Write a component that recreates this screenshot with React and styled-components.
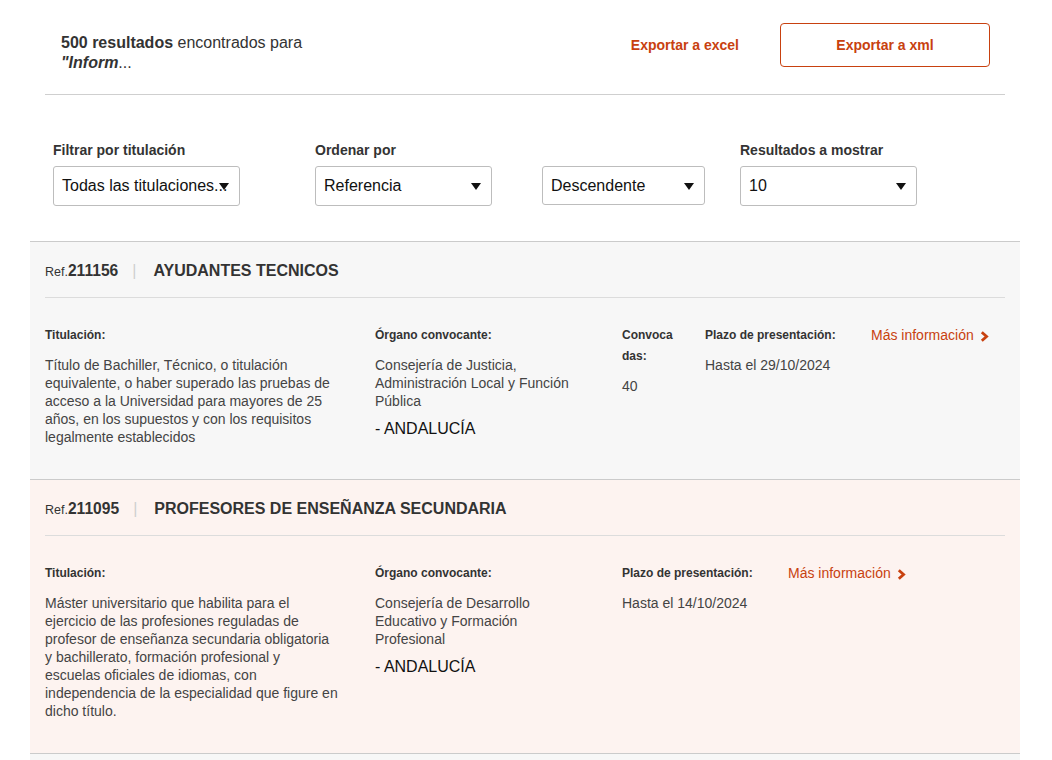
import React from "react";
import styled, { createGlobalStyle } from "styled-components";

const GlobalStyle = createGlobalStyle`
  html, body { margin: 0; padding: 0; background: #fff; }
  body { font-family: "Liberation Sans", Arial, sans-serif; color: #333; }
  * { box-sizing: border-box; }
`;

const RED = "#c8410f";

const Page = styled.div`
  width: 990px;
  margin-left: 30px;
  padding-top: 23px;
`;

const HeaderRow = styled.div`
  margin: 0 15px;
  padding: 0 15px 21px 16px;
  border-bottom: 1px solid #cfcfcf;
  display: flex;
  justify-content: space-between;
  align-items: flex-start;
`;

const Summary = styled.div`
  margin-top: 10px;
  font-size: 16px;
  line-height: 20px;
  color: #333;
  b { font-weight: bold; }
  i { font-weight: bold; }
`;

const Actions = styled.div`
  display: flex;
  align-items: center;
`;

const LinkButton = styled.a`
  font-size: 14px;
  font-weight: bold;
  color: ${RED};
  text-decoration: none;
  margin-right: 41px;
  cursor: pointer;
`;

const OutlineButton = styled.button`
  width: 210px;
  height: 44px;
  border: 1px solid ${RED};
  border-radius: 4px;
  background: #fff;
  color: ${RED};
  font-family: inherit;
  font-size: 14px;
  font-weight: bold;
  cursor: pointer;
`;

const Filters = styled.div`
  margin: 46px 15px 35px;
  padding-left: 8px;
  display: grid;
  grid-template-columns: 262px 227px 198px auto;
  align-items: end;
`;

const FilterGroup = styled.div`
  display: flex;
  flex-direction: column;
`;

const FilterLabel = styled.div`
  font-size: 14px;
  font-weight: bold;
  line-height: 18px;
  color: #333;
  margin-bottom: 7px;
`;

const SelectBox = styled.div`
  position: relative;
  width: ${(p) => p.$w}px;
  height: ${(p) => p.$h || 40}px;
  margin-bottom: ${(p) => (p.$h ? 40 - p.$h : 0)}px;
  border: 1px solid #bdbdbd;
  border-radius: 3px;
  background: #fff;
  padding: 0 0 0 8px;
  display: flex;
  align-items: center;
  font-size: 16px;
  color: #111;
  white-space: nowrap;
  overflow: hidden;
`;

const Arrow = styled.svg`
  position: absolute;
  right: 10px;
  top: 50%;
  margin-top: -3px;
`;

const Select = ({ w, h, children }) => (
  <SelectBox $w={w} $h={h}>
    {children}
    <Arrow width="10" height="7" viewBox="0 0 10 7">
      <path d="M0 0 L10 0 L5 7 Z" fill="#111" />
    </Arrow>
  </SelectBox>
);

const Card = styled.div`
  background: ${(p) => (p.$tint ? "#fdf3f0" : "#f7f7f7")};
  border-top: 1px solid #cbcbcb;
  min-height: ${(p) => (p.$stub ? "40px" : "auto")};
`;

const CardHeader = styled.div`
  margin: 0 15px;
  padding: 19px 0 15px;
  border-bottom: 1px solid #dcdcdc;
  display: flex;
  align-items: baseline;
  line-height: 20px;
  color: #333;
`;

const RefPrefix = styled.span`
  font-size: 12.5px;
`;

const RefNumber = styled.span`
  font-size: 15.6px;
  font-weight: bold;
`;

const Separator = styled.span`
  color: #cfcfcf;
  font-size: 16px;
  margin: 0 17px 0 14px;
`;

const Title = styled.span`
  font-size: 16px;
  font-weight: bold;
  color: #333;
`;

const CardBody = styled.div`
  padding: 27px 15px 33px;
  display: flex;
  align-items: flex-start;
`;

const Col = styled.div`
  width: ${(p) => p.$w}px;
  flex: none;
`;

const ColInner = styled.div`
  width: ${(p) => p.$w}px;
`;

const FieldLabel = styled.div`
  font-size: 12px;
  font-weight: bold;
  line-height: 21px;
  color: #333;
  margin-bottom: 10px;
  word-break: break-all;
`;

const FieldText = styled.div`
  font-size: 14px;
  line-height: 18px;
  color: #444;
`;

const Region = styled.div`
  margin-top: 9px;
  font-size: 16px;
  line-height: 20px;
  color: #111;
`;

const MoreLink = styled.a`
  display: inline-flex;
  align-items: center;
  font-size: 14px;
  line-height: 21px;
  color: ${RED};
  text-decoration: none;
  cursor: pointer;
  svg { margin-left: 6px; margin-top: 1px; }
`;

const Chevron = () => (
  <svg width="9" height="11" viewBox="0 0 9 11">
    <path d="M1.8 1.2 L6.6 5.5 L1.8 9.8" fill="none" stroke={RED} strokeWidth="2.8" strokeLinejoin="miter" />
  </svg>
);

const results = [
  {
    ref: "211156",
    title: "AYUDANTES TECNICOS",
    titulacion:
      "Título de Bachiller, Técnico, o titulación equivalente, o haber superado las pruebas de acceso a la Universidad para mayores de 25 años, en los supuestos y con los requisitos legalmente establecidos",
    organo: "Consejería de Justicia, Administración Local y Función Pública",
    region: "- ANDALUCÍA",
    convocadas: "40",
    plazo: "Hasta el 29/10/2024",
    tint: false,
  },
  {
    ref: "211095",
    title: "PROFESORES DE ENSEÑANZA SECUNDARIA",
    titulacion:
      "Máster universitario que habilita para el ejercicio de las profesiones reguladas de profesor de enseñanza secundaria obligatoria y bachillerato, formación profesional y escuelas oficiales de idiomas, con independencia de la especialidad que figure en dicho título.",
    organo: "Consejería de Desarrollo Educativo y Formación Profesional",
    region: "- ANDALUCÍA",
    convocadas: null,
    plazo: "Hasta el 14/10/2024",
    tint: true,
  },
];

export default function App() {
  return (
    <>
      <GlobalStyle />
      <Page>
        <HeaderRow>
          <Summary>
            <b>500 resultados</b> encontrados para
            <br />
            <i>"Inform</i>...
          </Summary>
          <Actions>
            <LinkButton>Exportar a excel</LinkButton>
            <OutlineButton>Exportar a xml</OutlineButton>
          </Actions>
        </HeaderRow>

        <Filters>
          <FilterGroup>
            <FilterLabel>Filtrar por titulación</FilterLabel>
            <Select w={187}>Todas las titulaciones...</Select>
          </FilterGroup>
          <FilterGroup>
            <FilterLabel>Ordenar por</FilterLabel>
            <Select w={177}>Referencia</Select>
          </FilterGroup>
          <FilterGroup>
            <Select w={163} h={39}>Descendente</Select>
          </FilterGroup>
          <FilterGroup>
            <FilterLabel>Resultados a mostrar</FilterLabel>
            <Select w={177}>10</Select>
          </FilterGroup>
        </Filters>

        {results.map((r) => (
          <Card key={r.ref} $tint={r.tint}>
            <CardHeader>
              <RefPrefix>Ref.</RefPrefix>
              <RefNumber>{r.ref}</RefNumber>
              <Separator>|</Separator>
              <Title>{r.title}</Title>
            </CardHeader>
            <CardBody>
              <Col $w={330}>
                <ColInner $w={294}>
                  <FieldLabel>Titulación:</FieldLabel>
                  <FieldText>{r.titulacion}</FieldText>
                </ColInner>
              </Col>
              <Col $w={247}>
                <ColInner $w={205}>
                  <FieldLabel>Órgano convocante:</FieldLabel>
                  <FieldText>{r.organo}</FieldText>
                  <Region>{r.region}</Region>
                </ColInner>
              </Col>
              {r.convocadas && (
                <Col $w={83}>
                  <ColInner $w={53}>
                    <FieldLabel>Convocadas:</FieldLabel>
                    <FieldText>{r.convocadas}</FieldText>
                  </ColInner>
                </Col>
              )}
              <Col $w={166}>
                <FieldLabel>Plazo de presentación:</FieldLabel>
                <FieldText>{r.plazo}</FieldText>
              </Col>
              <Col $w={150}>
                <MoreLink>
                  Más información
                  <Chevron />
                </MoreLink>
              </Col>
            </CardBody>
          </Card>
        ))}
        <Card $stub />
      </Page>
    </>
  );
}
